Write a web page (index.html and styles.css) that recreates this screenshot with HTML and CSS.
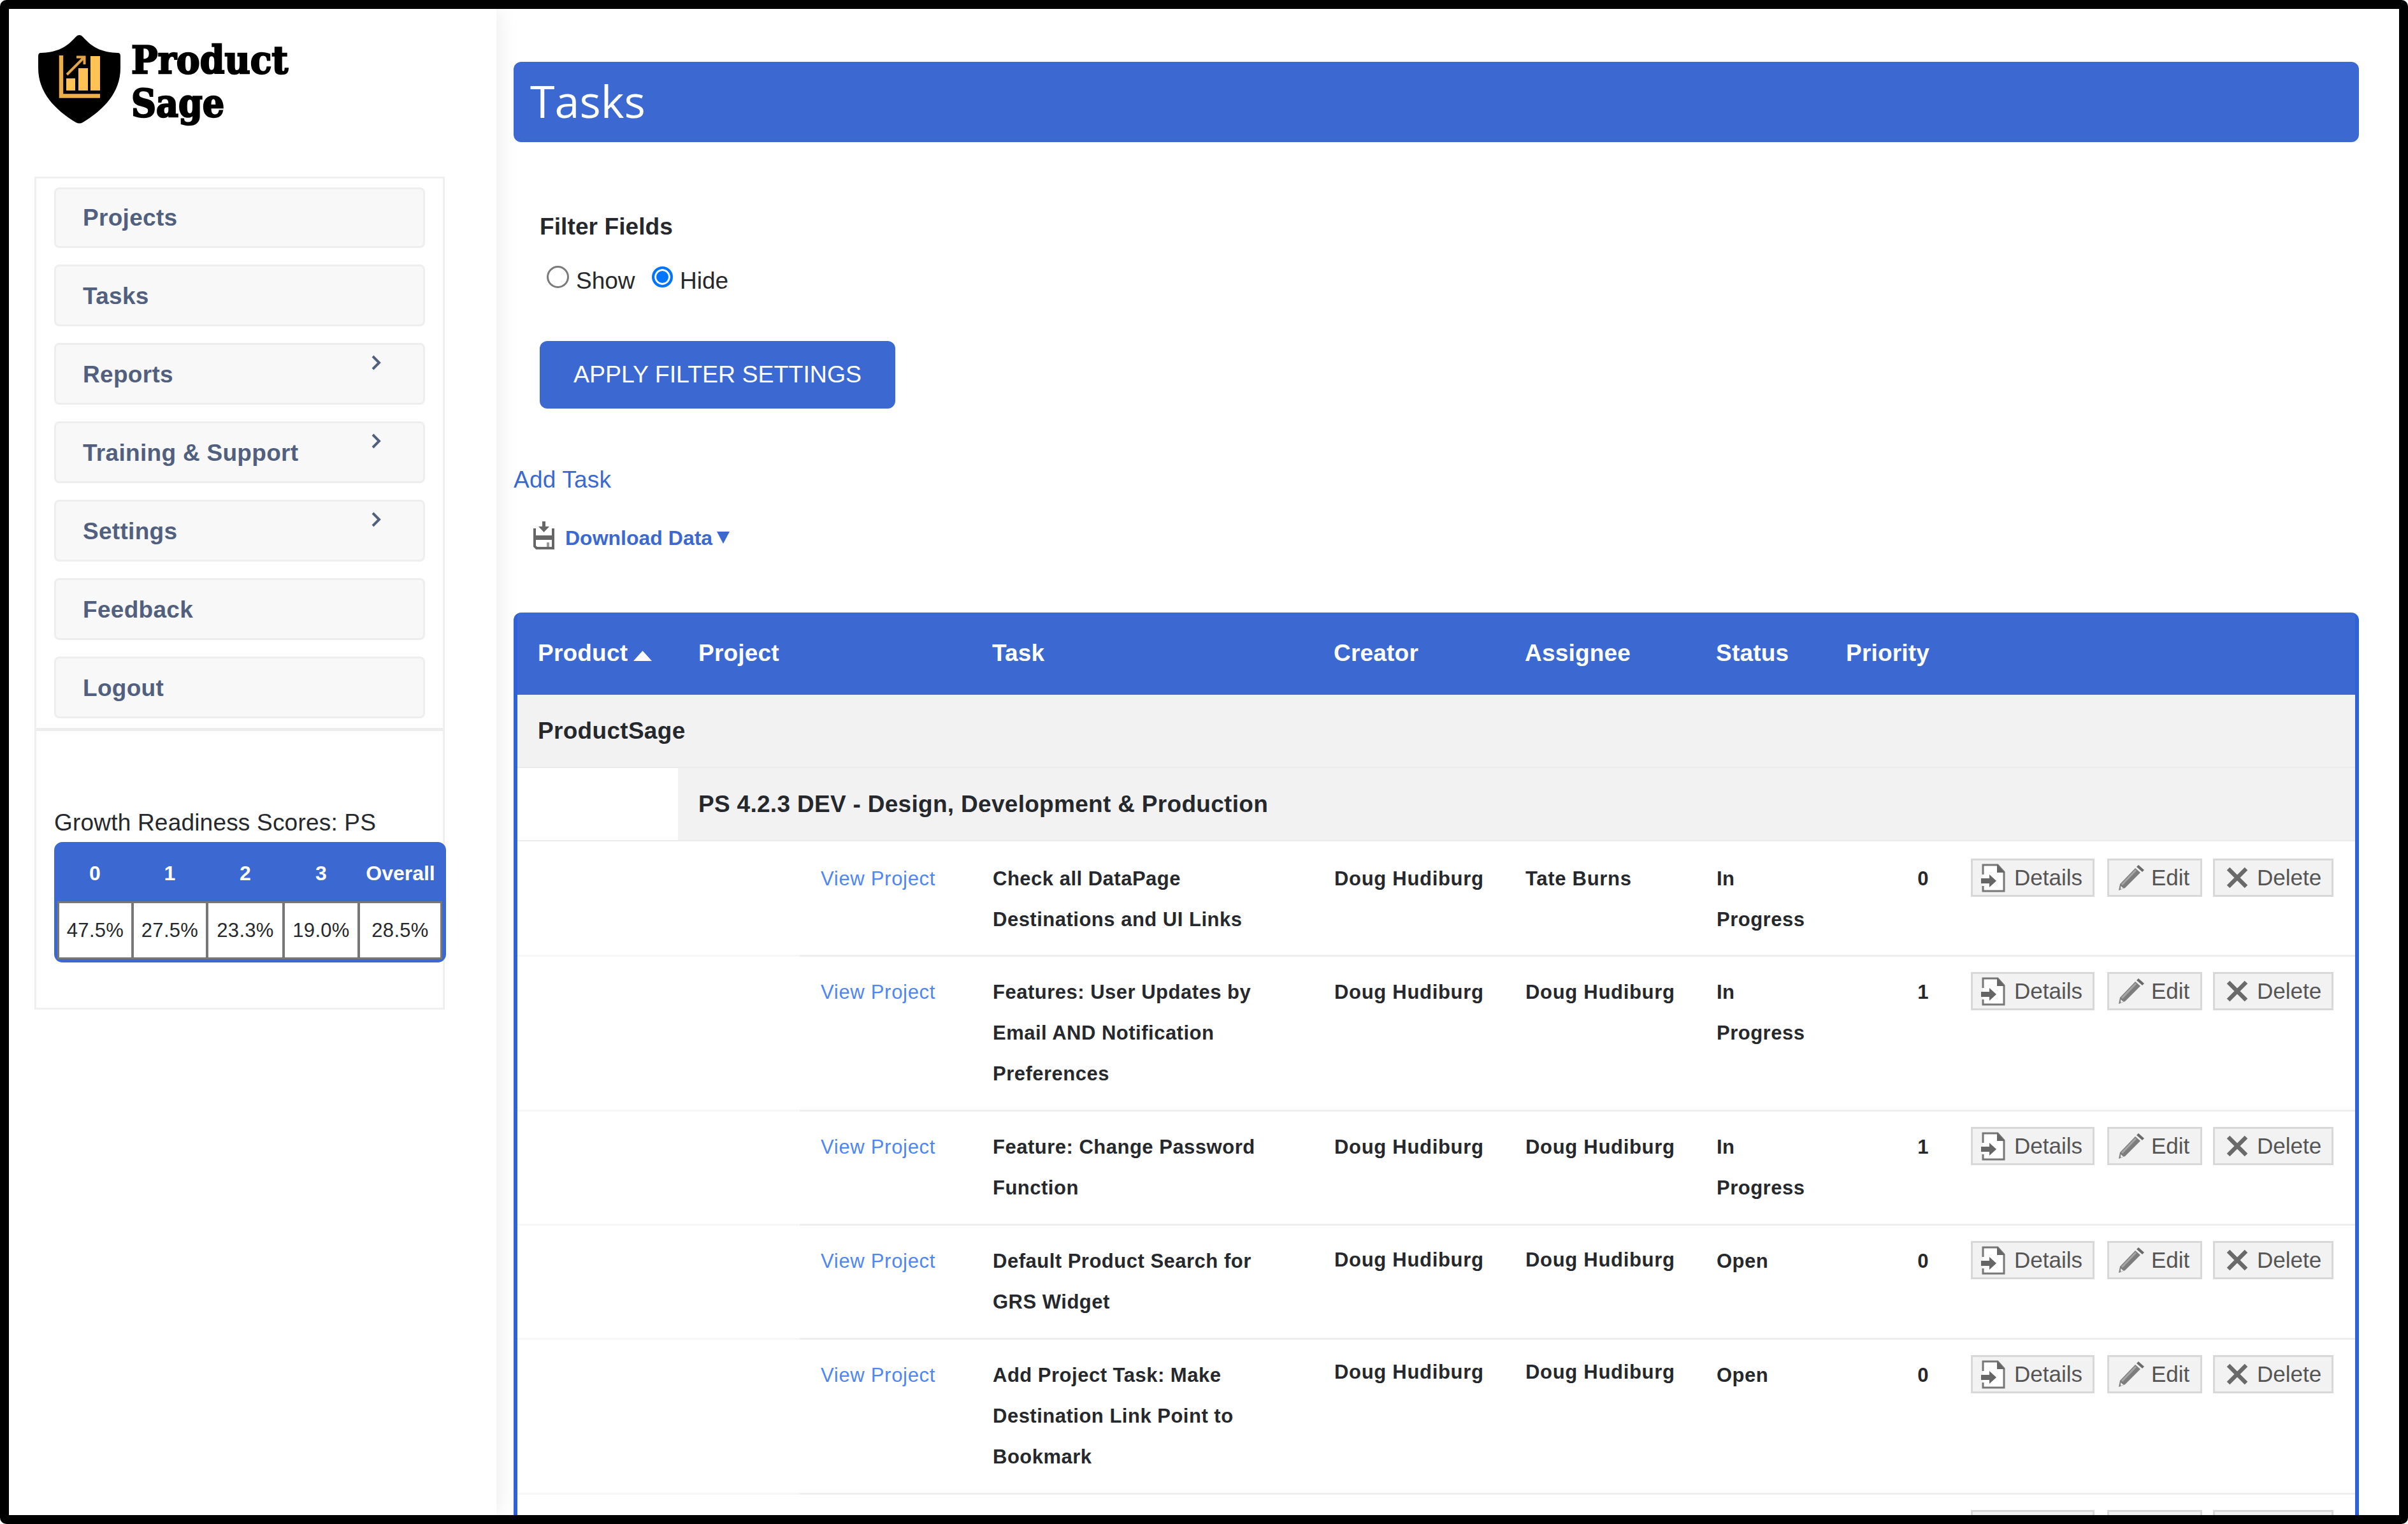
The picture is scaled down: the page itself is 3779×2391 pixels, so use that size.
FILE: index.html
```
<!DOCTYPE html>
<html lang="en">
<head>
    <meta charset="UTF-8">
    <title>Tasks - Product Sage</title>
    <link rel="stylesheet" href="styles.css">
</head>
<body>
    <svg class="defs" width="0" height="0">
        <symbol id="i-details" viewBox="0 0 38 45">
            <path d="M3 17V2H26L36 13V43H3V35" fill="#fff" stroke="#777" stroke-width="3"/>
            <path d="M25 1V14H37Z" fill="#666"/>
            <path d="M0 23H13V17L24 27L13 37V31H0Z" fill="#666"/>
        </symbol>
        <symbol id="i-edit" viewBox="0 0 40 40">
            <path d="M0 40L2 30L26 5L34 12L10 36Z" fill="#7d7d7d"/>
            <path d="M5 31L27 8" stroke="#a5a5a5" stroke-width="3"/>
            <path d="M28 3L31 0L40 8L37 11Z" fill="#6a6a6a"/>
            <path d="M3 33L8 37L3 38Z" fill="#eee"/>
        </symbol>
        <symbol id="i-delete" viewBox="0 0 34 34">
            <path d="M3 3L31 31M31 3L3 31" stroke="#6a6a6a" stroke-width="6.5"/>
        </symbol>
    </svg>
    <div class="window">
        <aside class="sidebar">
            <svg class="logo" width="480" height="145" viewBox="0 0 480 145">
                <path d="M64.500 0C68 0 70 3 73 6C88 22 103 27 125 28Q129 28 129 33V52C129 90 103 117 70 137Q64.500 140 59 137C26 117 0 90 0 52V33Q0 28 4 28C26 27 41 22 56 6C59 3 61 0 64.500 0Z"/>
                <path d="M36 32V95.500H97" fill="none" stroke="#efb04c" stroke-width="6.500"/>
                <path d="M44 68H58V87H44ZM63 52H78V87H63ZM82 33H97V87H82Z" fill="#ffc355"/>
                <path d="M45 62L71 36M60 34.500H72.500V46" fill="none" stroke="#e3a54a" stroke-width="4"/>
                <text class="logo-text" x="146" y="60" textLength="246" lengthAdjust="spacingAndGlyphs">Product</text>
                <text class="logo-text" x="146" y="128" textLength="146" lengthAdjust="spacingAndGlyphs">Sage</text>
            </svg>
            <div class="panel">
                <nav class="menu">
                    <a class="item">Projects</a>
                    <a class="item">Tasks</a>
                    <a class="item">Reports<svg class="chev" viewBox="0 0 15 24"><path d="M2 2L12 12L2 22"/></svg></a>
                    <a class="item">Training &amp; Support<svg class="chev" viewBox="0 0 15 24"><path d="M2 2L12 12L2 22"/></svg></a>
                    <a class="item">Settings<svg class="chev" viewBox="0 0 15 24"><path d="M2 2L12 12L2 22"/></svg></a>
                    <a class="item">Feedback</a>
                    <a class="item">Logout</a>
                </nav>
                <div class="scores">
                    <div class="scores-title">Growth Readiness Scores: PS</div>
                    <div class="score-box">
                        <div class="score-row head">
                            <span>0</span><span>1</span><span>2</span><span>3</span><span>Overall</span>
                        </div>
                        <div class="score-row vals">
                            <span>47.5%</span><span>27.5%</span><span>23.3%</span><span>19.0%</span><span>28.5%</span>
                        </div>
                    </div>
                </div>
            </div>
        </aside>
        <main class="main">
            <h1>Tasks</h1>
            <div class="filter">
                <div class="filter-title">Filter Fields</div>
                <div class="radios">
                    <span class="radio"></span><label class="show">Show</label>
                    <span class="radio on"></span><label>Hide</label>
                </div>
                <button class="apply">APPLY FILTER SETTINGS</button>
            </div>
            <a class="add">Add Task</a>
            <div class="download">
                <svg width="33" height="44" viewBox="0 0 33 44">
                    <path d="M2 11V39L5 42H31V11" fill="none" stroke="#666" stroke-width="4"/>
                    <path d="M3 22H31V29H3Z" fill="#666"/>
                    <path d="M21 33H25V40H21Z" fill="#999"/>
                    <path d="M14 0H19V8H25L16.500 17L8 8H14Z" fill="#666"/>
                </svg>
                <span>Download Data</span>
                <svg class="down" width="20" height="19" viewBox="0 0 20 19"><path d="M0 0H20L10 19Z" fill="#3b69d1"/></svg>
            </div>
            <table class="tasks">
                <colgroup>
                    <col class="c-product"><col class="c-project"><col class="c-view"><col class="c-task"><col class="c-creator">
                    <col class="c-assignee"><col class="c-status"><col class="c-priority"><col class="c-actions">
                </colgroup>
                <thead>
                    <tr>
                        <th>Product<svg class="sort" width="29" height="16" viewBox="0 0 29 16"><path d="M14.500 0L29 16H0Z" fill="#fff"/></svg></th>
                        <th colspan="2">Project</th>
                        <th>Task</th>
                        <th>Creator</th>
                        <th>Assignee</th>
                        <th>Status</th>
                        <th>Priority</th>
                        <th></th>
                    </tr>
                </thead>
                <tbody>
                    <tr class="group"><td colspan="9">ProductSage</td></tr>
                    <tr class="group"><td class="blank"></td><td colspan="8">PS 4.2.3 DEV - Design, Development &amp; Production</td></tr>
                    <tr class="task first">
                        <td class="indent" colspan="2"></td>
                        <td><a>View Project</a></td>
                        <td>Check all DataPage<br>Destinations and UI Links</td>
                        <td class="who">Doug Hudiburg</td>
                        <td class="who">Tate Burns</td>
                        <td>In<br>Progress</td>
                        <td class="num">0</td>
                        <td class="actions"><div>
                            <span class="btn details"><svg><use href="#i-details"/></svg>Details</span>
                            <span class="btn edit"><svg><use href="#i-edit"/></svg>Edit</span>
                            <span class="btn delete"><svg><use href="#i-delete"/></svg>Delete</span>
                        </div></td>
                    </tr>
                    <tr class="task long">
                        <td class="indent" colspan="2"></td>
                        <td><a>View Project</a></td>
                        <td>Features: User Updates by<br>Email AND Notification<br>Preferences</td>
                        <td class="who">Doug Hudiburg</td>
                        <td class="who">Doug Hudiburg</td>
                        <td>In<br>Progress</td>
                        <td class="num">1</td>
                        <td class="actions"><div>
                            <span class="btn details"><svg><use href="#i-details"/></svg>Details</span>
                            <span class="btn edit"><svg><use href="#i-edit"/></svg>Edit</span>
                            <span class="btn delete"><svg><use href="#i-delete"/></svg>Delete</span>
                        </div></td>
                    </tr>
                    <tr class="task">
                        <td class="indent" colspan="2"></td>
                        <td><a>View Project</a></td>
                        <td>Feature: Change Password<br>Function</td>
                        <td class="who">Doug Hudiburg</td>
                        <td class="who">Doug Hudiburg</td>
                        <td>In<br>Progress</td>
                        <td class="num">1</td>
                        <td class="actions"><div>
                            <span class="btn details"><svg><use href="#i-details"/></svg>Details</span>
                            <span class="btn edit"><svg><use href="#i-edit"/></svg>Edit</span>
                            <span class="btn delete"><svg><use href="#i-delete"/></svg>Delete</span>
                        </div></td>
                    </tr>
                    <tr class="task open">
                        <td class="indent" colspan="2"></td>
                        <td><a>View Project</a></td>
                        <td>Default Product Search for<br>GRS Widget</td>
                        <td class="who">Doug Hudiburg</td>
                        <td class="who">Doug Hudiburg</td>
                        <td>Open</td>
                        <td class="num">0</td>
                        <td class="actions"><div>
                            <span class="btn details"><svg><use href="#i-details"/></svg>Details</span>
                            <span class="btn edit"><svg><use href="#i-edit"/></svg>Edit</span>
                            <span class="btn delete"><svg><use href="#i-delete"/></svg>Delete</span>
                        </div></td>
                    </tr>
                    <tr class="task long open">
                        <td class="indent" colspan="2"></td>
                        <td><a>View Project</a></td>
                        <td>Add Project Task: Make<br>Destination Link Point to<br>Bookmark</td>
                        <td class="who">Doug Hudiburg</td>
                        <td class="who">Doug Hudiburg</td>
                        <td>Open</td>
                        <td class="num">0</td>
                        <td class="actions"><div>
                            <span class="btn details"><svg><use href="#i-details"/></svg>Details</span>
                            <span class="btn edit"><svg><use href="#i-edit"/></svg>Edit</span>
                            <span class="btn delete"><svg><use href="#i-delete"/></svg>Delete</span>
                        </div></td>
                    </tr>
                    <tr class="task">
                        <td class="indent" colspan="2"></td>
                        <td></td>
                        <td></td>
                        <td></td>
                        <td></td>
                        <td></td>
                        <td></td>
                        <td class="actions"><div>
                            <span class="btn details"></span>
                            <span class="btn edit"></span>
                            <span class="btn delete"></span>
                        </div></td>
                    </tr>
                </tbody>
            </table>
        </main>
    </div>
</body>
</html>
```
FILE: styles.css
```
* {
    box-sizing: border-box;
}

body {
    margin: 0;
    background: #fff;
    font-family: "Liberation Sans", Arial, sans-serif;
    font-size: 37px;
    color: #25282c;
}

.defs {
    display: block;
}

.window {
    display: flex;
    width: 3779px;
    height: 2391px;
    border: 14px solid #000;
    border-radius: 10px;
    overflow: hidden;
    background: #fff;
}

/* Sidebar */
.sidebar {
    flex: none;
    width: 765px;
    padding: 41px 0 0 40px;
    background: #fff;
    box-shadow: 0 0 36px rgba(0, 0, 0, 0.09);
}

.logo {
    display: block;
    margin-left: 6px;
    overflow: visible;
}

.logo-text {
    font-family: "DejaVu Serif", serif;
    font-weight: bold;
    font-size: 59px;
    stroke: #000;
    stroke-width: 2.5px;
}

.panel {
    width: 644px;
    height: 1307px;
    margin-top: 77px;
    border: 3px solid #f0f0f0;
}

.menu {
    display: flex;
    flex-direction: column;
    gap: 26px;
    padding: 14px 28px 15px 28px;
    border-bottom: 5px solid #ededed;
}

.item {
    display: flex;
    justify-content: space-between;
    align-items: center;
    height: 97px;
    padding: 2px 66px 0 42px;
    border: 3px solid #eee;
    border-radius: 8px;
    background: #f8f8f8;
    color: #52607f;
    font-weight: bold;
    letter-spacing: 0.3px;
}

.item:first-child {
    height: 95px;
    padding-top: 0;
}

.chev {
    align-self: flex-start;
    width: 15px;
    height: 24px;
    margin-top: 14px;
    fill: none;
    stroke: #52607f;
    stroke-width: 4;
}

.scores {
    padding: 114px 0 0 28px;
}

.scores-title {
    line-height: 60px;
    letter-spacing: 0.2px;
}

.score-box {
    width: 615px;
    height: 189px;
    padding: 0 6px 5px 5px;
    border-radius: 13px;
    background: #3b69d1;
    font-size: 31px;
}

.score-row {
    display: grid;
    grid-template-columns: 118px 117px 120px 118px 131px;
    text-align: center;
}

.head {
    height: 93px;
    padding-top: 5px;
    line-height: 88px;
    color: #fff;
    font-weight: bold;
    font-size: 32px;
}

.vals {
    border: 3px solid #777;
    background: #fff;
    line-height: 86px;
    height: 91px;
    grid-template-columns: 113px 117px 120px 118px 130px;
    letter-spacing: 0.3px;
}

.vals span + span {
    border-left: 4px solid #777;
}

/* Main */
.main {
    flex: 1;
    padding: 83px 63px 0 27px;
}

h1 {
    height: 126px;
    margin: 0;
    padding-left: 26px;
    border-radius: 12px;
    background: #3b69d1;
    color: #fff;
    font: normal 70px/123px "Open Sans", sans-serif;
}

.filter {
    padding: 113px 0 0 41px;
}

.filter-title {
    line-height: 40px;
    font-weight: bold;
    letter-spacing: 0.1px;
}

.radios {
    display: flex;
    height: 40px;
    margin-top: 45px;
    padding-left: 11px;
    line-height: 40px;
}

.radio {
    width: 35px;
    height: 35px;
    margin: -4px 11px 0 0;
    border: 3px solid #7a7a7a;
    border-radius: 50%;
}

.radio.on {
    width: 33px;
    height: 33px;
    margin-top: -3px;
    border: 4px solid #0075ff;
    background: #0075ff;
    box-shadow: inset 0 0 0 3px #fff;
}

.show {
    width: 119px;
}

.apply {
    display: block;
    width: 558px;
    height: 106px;
    margin-top: 74px;
    padding: 0 0 2px;
    border: 0;
    border-radius: 12px;
    background: #3b69d1;
    color: #fff;
    font: 37.5px "Liberation Sans", Arial, sans-serif;
}

.add {
    display: block;
    margin-top: 92px;
    line-height: 40px;
    color: #3b69d1;
    letter-spacing: 0.2px;
}

.download {
    display: flex;
    align-items: center;
    height: 44px;
    margin: 49px 0 95px;
    padding-left: 31px;
    color: #3b69d1;
    font-size: 32px;
    font-weight: bold;
}

.download svg {
    margin: -9px 17px 0 0;
}

.download .down {
    margin: -1px 0 0 7px;
}

/* Task table */
.tasks {
    width: 2896px;
    table-layout: fixed;
    border-collapse: separate;
    border-spacing: 0;
    border: 6px solid #2e62d6;
    border-top: 0;
    border-bottom: 0;
    border-radius: 12px 12px 0 0;
    background: #fff;
}

.c-product { width: 252px; }
.c-project { width: 191px; }
.c-view { width: 270px; }
.c-task { width: 536px; }
.c-creator { width: 300px; }
.c-assignee { width: 300px; }
.c-status { width: 204px; }
.c-priority { width: 193px; }

.tasks th {
    height: 129px;
    padding: 0 0 1px 32px;
    background: #3b69d1;
    color: #fff;
    text-align: left;
    white-space: nowrap;
    letter-spacing: 0.2px;
}

.tasks th:first-child {
    border-top-left-radius: 6px;
}

.tasks th:last-child {
    border-top-right-radius: 6px;
}

.sort {
    margin-left: 9px;
}

.group td {
    height: 115px;
    padding: 0 0 0 32px;
    border-bottom: 2px solid #ebebeb;
    background: #f2f2f2;
    font-weight: bold;
    letter-spacing: 0.3px;
}

.group .blank {
    background: #fff;
}

.task td {
    height: 179px;
    padding: 24px 0 0 33px;
    border-bottom: 3px solid #eee;
    vertical-align: top;
    font-size: 31px;
    font-weight: bold;
    line-height: 64px;
    letter-spacing: 0.5px;
    white-space: nowrap;
}

.task.first td {
    height: 181px;
    padding-top: 27px;
}

.task.long td {
    height: 243px;
}

.task .indent {
    border-bottom-color: #f7f7f7;
}

.task a {
    color: #4d86f7;
    font-weight: normal;
    letter-spacing: 0.7px;
}

.task .who {
    letter-spacing: 0.7px;
}

.task.open .who {
    padding-top: 22px;
}

.task.long.open .who {
    padding-top: 19px;
}

.task .num {
    padding-right: 31px;
    text-align: right;
}

.actions div {
    display: flex;
    gap: 20px;
    padding-left: 2px;
}

.btn {
    display: flex;
    align-items: center;
    height: 60px;
    border: 3px solid #d8d8d8;
    background: #f2f2f2;
    color: #555;
    font-size: 35px;
    font-weight: normal;
    line-height: 54px;
    letter-spacing: 0;
}

.details {
    width: 194px;
    padding-left: 13px;
}

.details svg {
    width: 38px;
    height: 45px;
    margin-right: 14px;
}

.edit {
    width: 149px;
    padding-left: 15px;
}

.edit svg {
    width: 40px;
    height: 40px;
    margin-right: 11px;
}

.delete {
    width: 189px;
    margin-left: -3px;
    padding-left: 18px;
}

.delete svg {
    width: 34px;
    height: 34px;
    margin-right: 14px;
}
```
